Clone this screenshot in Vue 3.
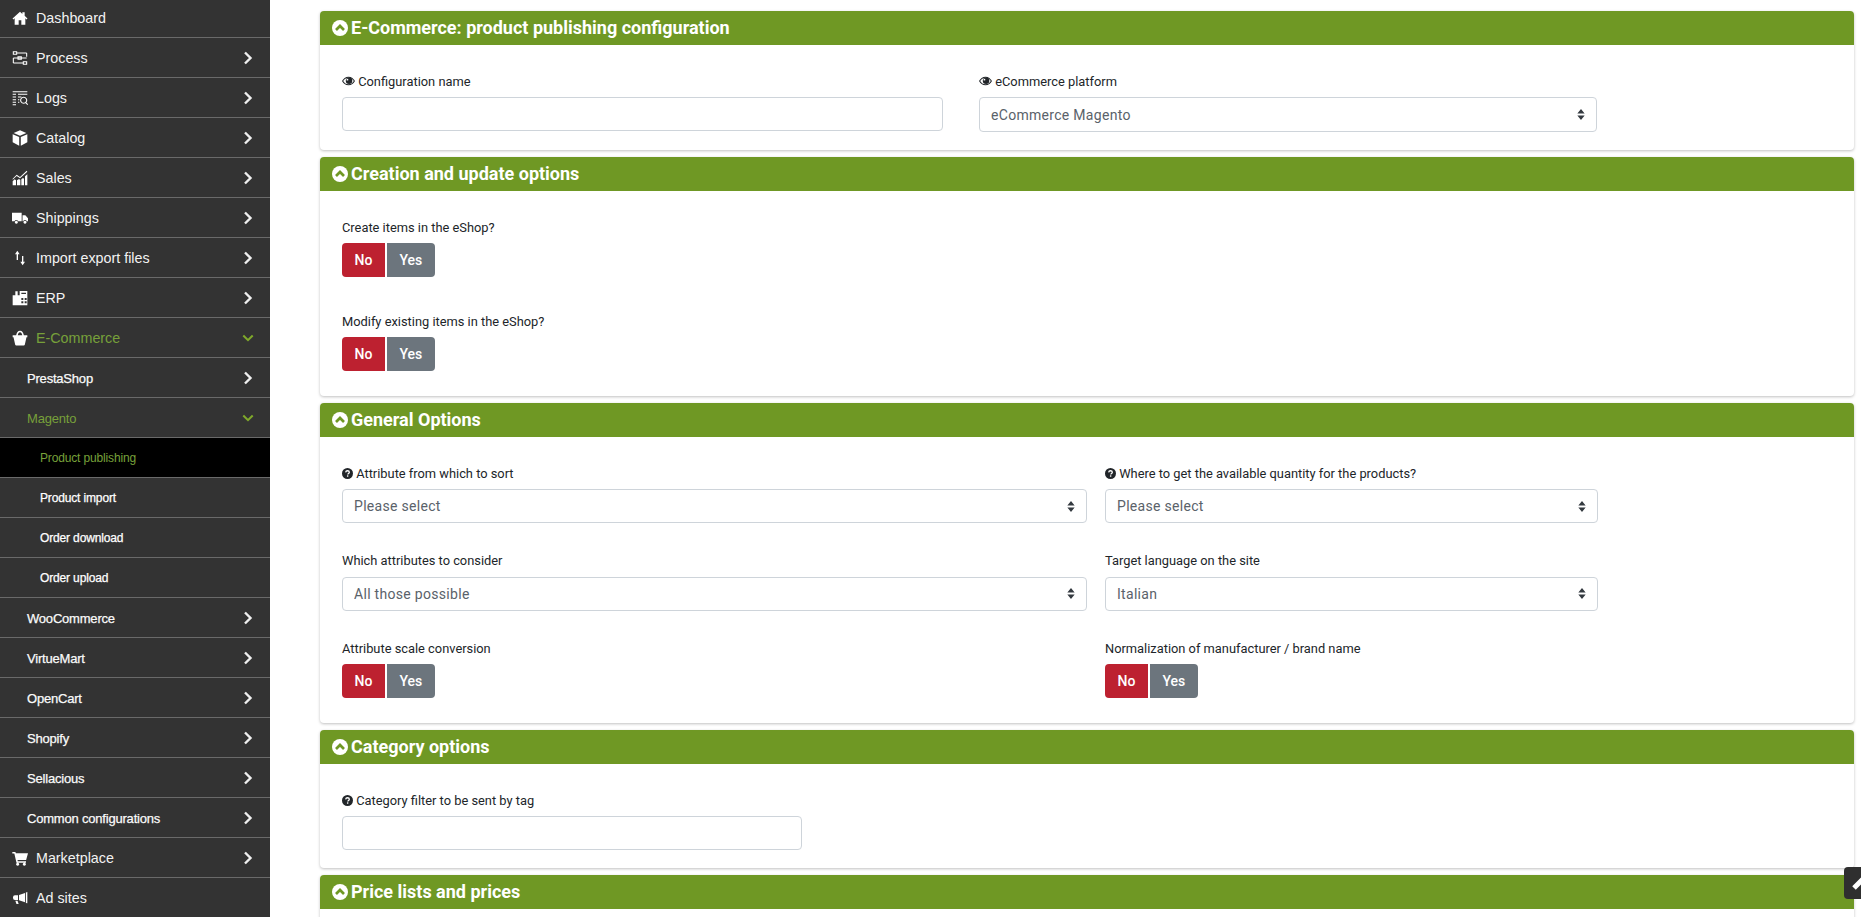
<script setup>
const icons = {
  home: 'M12 2.500 0.800 12.600l1.300 1.500L4 12.500V22h6v-6.500h4V22h6v-9.500l1.900 1.600 1.300-1.500-4.200-3.800V3.500h-3.500v2.400z',
  process: 'M2 2.500h5v4H2zM7 4.500h15M22 4.500v5.500M2 12h20M2 12v7.500M9 10h5v4H9zM2 19.500h15M17 17.500h5v4h-5z',
  logs: 'M1 2.500h22M9 6.500h14M1 6.500h5M1 10.500h5M9 10.500h5M1 14.500h5M1 18.500h5M1 22h5M9 14.500h2M9 18.500h2M17.500 11a4.500 4.500 0 1 0 .01 0M20.500 18.500l3 3.500',
  cube: 'M12 .5 2.500 4.500 12 8.500l9.500-4zM1 6.500v11.800l9.800 5.200V10.500zM23 6.500 13.200 10.500v13l9.800-5.200z',
  sales: 'M1 23v-6l3-3 2 1.500V23zM7.500 23v-7.500l3-2 2 1.500v8zM14 23v-9l2.500-2 1.500 1v10zM19.500 23V9.500l3.500-3V23zM1 13l6-6 5 3.500L22 1l1 1.500-11 10-5-3.500-6 5.500z',
  truck: 'M0 4h14.500v13H9.200a2.900 2.900 0 0 0-5.400 0H0zM15.800 8h4.200l4 4.500V17h-1.800a2.900 2.900 0 0 0-5.400 0h-1zM6.500 16a2.300 2.300 0 1 0 .01 0M19.500 16a2.300 2.300 0 1 0 .01 0',
  erp: 'M1 23V8h4V2h3.500v6h3V1.500H23V23zM14 12h3v3h-3zM19 12h3v3h-3zM14 17h3v3h-3zM19 17h3v3h-3zM14 4h7v2h-7z',
  basket: 'M12 1c-3.200 0-5 2.500-5.800 7H1v2.800h1.300L4.800 22a1.700 1.700 0 0 0 1.700 1.200h11A1.700 1.700 0 0 0 19.200 22l2.500-11.200H23V8h-5.200C17 3.500 15.200 1 12 1zm0 2.500c1.700 0 2.800 1.600 3.400 4.500H8.600C9.200 5.100 10.300 3.500 12 3.500z',
  cart: 'M.5 3h4.500l.8 2H24l-2.800 10H8.300l.4 2H21v2.300H6.700L3.500 5.300H.5zM8.500 19a2.300 2.300 0 1 0 .01 0M18.500 19a2.300 2.300 0 1 0 .01 0',
  horn: 'M23 3v17l-2.200-.6V3.600zM19.500 4.500v14L10.500 15.500V7.500zM9 8v7H4.500a3 3 0 0 1-3-3v-1a3 3 0 0 1 3-3zM5 16h3.300l1.700 5H6.700z'
}

const menu = [
  { label: 'Dashboard', icon: 'home', arrow: false },
  { label: 'Process', icon: 'process', stroke: true, arrow: true },
  { label: 'Logs', icon: 'logs', stroke: true, arrow: true },
  { label: 'Catalog', icon: 'cube', arrow: true },
  { label: 'Sales', icon: 'sales', arrow: true },
  { label: 'Shippings', icon: 'truck', arrow: true },
  { label: 'Import export files', icon: 'updown', arrow: true },
  { label: 'ERP', icon: 'erp', arrow: true },
  { label: 'E-Commerce', icon: 'basket', arrow: true, open: true },
  { label: 'PrestaShop', level: 1, arrow: true },
  { label: 'Magento', level: 1, arrow: true, open: true },
  { label: 'Product publishing', level: 2, active: true },
  { label: 'Product import', level: 2 },
  { label: 'Order download', level: 2 },
  { label: 'Order upload', level: 2 },
  { label: 'WooCommerce', level: 1, arrow: true },
  { label: 'VirtueMart', level: 1, arrow: true },
  { label: 'OpenCart', level: 1, arrow: true },
  { label: 'Shopify', level: 1, arrow: true },
  { label: 'Sellacious', level: 1, arrow: true },
  { label: 'Common configurations', level: 1, arrow: true },
  { label: 'Marketplace', icon: 'cart', arrow: true },
  { label: 'Ad sites', icon: 'horn', arrow: false }
]
</script>

<template>
  <div class="page">
    <nav class="sidebar">
      <a
        v-for="item in menu"
        :key="item.label"
        class="item"
        :class="[`level-${item.level || 0}`, { open: item.open, active: item.active }]"
      >
        <span v-if="item.icon" class="item-icon">
          <svg v-if="item.icon === 'updown'" viewBox="0 0 24 24">
            <path d="M8 1 4.500 6.500H7V15h2V6.500h2.500zM16 23l3.500-5.500H17V9h-2v8.500h-2.500z" fill="#fff" />
          </svg>
          <svg v-else viewBox="0 0 24 24">
            <path
              :d="icons[item.icon]"
              :fill="item.stroke ? 'none' : '#fff'"
              :stroke="item.stroke ? '#fff' : 'none'"
              :stroke-width="item.stroke ? 1.6 : 0"
              fill-rule="evenodd"
            />
          </svg>
        </span>
        <span class="item-label">{{ item.label }}</span>
        <svg v-if="item.arrow && !item.open" class="chev" viewBox="0 0 10 14">
          <path d="M2 1.500 7.500 7 2 12.500" />
        </svg>
        <svg v-if="item.arrow && item.open" class="chev-down" viewBox="0 0 14 10">
          <path d="M1.500 2 7 7.500 12.500 2" />
        </svg>
      </a>
    </nav>

    <main class="content">
      <section class="card">
        <h2 class="card-head">
          <svg class="head-icon" viewBox="0 0 24 24"><circle cx="12" cy="12" r="12" fill="#fff" /><path d="M6 15l6-6 6 6" fill="none" stroke="#6f9824" stroke-width="4" /></svg>
          E-Commerce: product publishing configuration
        </h2>
        <div class="card-body grid-a">
          <div class="field">
            <label class="lbl"><svg class="eye" viewBox="0 0 24 16"><path d="M12 0C6.500 0 2.500 3.500 0 8c2.500 4.500 6.500 8 12 8s9.500-3.500 12-8c-2.500-4.500-6.500-8-12-8z" /><path fill="#fff" d="M12 1.800C7.500 1.800 4.300 4.500 2.200 8c2.100 3.500 5.300 6.200 9.800 6.200s7.700-2.700 9.800-6.200c-2.100-3.500-5.300-6.200-9.800-6.200z" /><circle cx="13" cy="7.500" r="6" /><rect x="8.500" y="4" width="3" height="3" fill="#fff" /></svg> Configuration name</label>
            <input class="control input" type="text" />
          </div>
          <div class="field">
            <label class="lbl"><svg class="eye" viewBox="0 0 24 16"><path d="M12 0C6.500 0 2.500 3.500 0 8c2.500 4.500 6.500 8 12 8s9.500-3.500 12-8c-2.500-4.500-6.500-8-12-8z" /><path fill="#fff" d="M12 1.800C7.500 1.800 4.300 4.500 2.200 8c2.100 3.500 5.300 6.200 9.800 6.200s7.700-2.700 9.800-6.200c-2.100-3.500-5.300-6.200-9.800-6.200z" /><circle cx="13" cy="7.500" r="6" /><rect x="8.500" y="4" width="3" height="3" fill="#fff" /></svg> eCommerce platform</label>
            <select class="control select tall"><option>eCommerce Magento</option></select>
          </div>
        </div>
      </section>

      <section class="card">
        <h2 class="card-head">
          <svg class="head-icon" viewBox="0 0 24 24"><circle cx="12" cy="12" r="12" fill="#fff" /><path d="M6 15l6-6 6 6" fill="none" stroke="#6f9824" stroke-width="4" /></svg>
          Creation and update options
        </h2>
        <div class="card-body stack">
          <div class="field">
            <label class="lbl">Create items in the eShop?</label>
            <div class="toggle"><button class="no">No</button><button class="yes">Yes</button></div>
          </div>
          <div class="field">
            <label class="lbl">Modify existing items in the eShop?</label>
            <div class="toggle"><button class="no">No</button><button class="yes">Yes</button></div>
          </div>
        </div>
      </section>

      <section class="card">
        <h2 class="card-head">
          <svg class="head-icon" viewBox="0 0 24 24"><circle cx="12" cy="12" r="12" fill="#fff" /><path d="M6 15l6-6 6 6" fill="none" stroke="#6f9824" stroke-width="4" /></svg>
          General Options
        </h2>
        <div class="card-body grid-b">
          <div class="field">
            <label class="lbl"><svg class="help" viewBox="0 0 24 24"><circle cx="12" cy="12" r="12" /><path d="M8 9.500C8.300 7 10 6 12 6c2.500 0 4 1.500 4 3.300 0 2.700-3.300 2.700-3.300 5" fill="none" stroke="#fff" stroke-width="2.800" /><rect x="10.800" y="16" width="3" height="3" fill="#fff" /></svg> Attribute from which to sort</label>
            <select class="control select"><option>Please select</option></select>
          </div>
          <div class="field">
            <label class="lbl"><svg class="help" viewBox="0 0 24 24"><circle cx="12" cy="12" r="12" /><path d="M8 9.500C8.300 7 10 6 12 6c2.500 0 4 1.500 4 3.300 0 2.700-3.300 2.700-3.300 5" fill="none" stroke="#fff" stroke-width="2.800" /><rect x="10.800" y="16" width="3" height="3" fill="#fff" /></svg> Where to get the available quantity for the products?</label>
            <select class="control select"><option>Please select</option></select>
          </div>
          <div class="field">
            <label class="lbl">Which attributes to consider</label>
            <select class="control select"><option>All those possible</option></select>
          </div>
          <div class="field">
            <label class="lbl">Target language on the site</label>
            <select class="control select"><option>Italian</option></select>
          </div>
          <div class="field">
            <label class="lbl">Attribute scale conversion</label>
            <div class="toggle"><button class="no">No</button><button class="yes">Yes</button></div>
          </div>
          <div class="field">
            <label class="lbl">Normalization of manufacturer / brand name</label>
            <div class="toggle"><button class="no">No</button><button class="yes">Yes</button></div>
          </div>
        </div>
      </section>

      <section class="card">
        <h2 class="card-head">
          <svg class="head-icon" viewBox="0 0 24 24"><circle cx="12" cy="12" r="12" fill="#fff" /><path d="M6 15l6-6 6 6" fill="none" stroke="#6f9824" stroke-width="4" /></svg>
          Category options
        </h2>
        <div class="card-body grid-c">
          <div class="field">
            <label class="lbl"><svg class="help" viewBox="0 0 24 24"><circle cx="12" cy="12" r="12" /><path d="M8 9.500C8.300 7 10 6 12 6c2.500 0 4 1.500 4 3.300 0 2.700-3.300 2.700-3.300 5" fill="none" stroke="#fff" stroke-width="2.800" /><rect x="10.800" y="16" width="3" height="3" fill="#fff" /></svg> Category filter to be sent by tag</label>
            <input class="control input" type="text" />
          </div>
        </div>
      </section>

      <section class="card last">
        <h2 class="card-head">
          <svg class="head-icon" viewBox="0 0 24 24"><circle cx="12" cy="12" r="12" fill="#fff" /><path d="M6 15l6-6 6 6" fill="none" stroke="#6f9824" stroke-width="4" /></svg>
          Price lists and prices
        </h2>
      </section>
    </main>

    <a class="to-top">
      <svg viewBox="0 0 24 24"><path d="M4 16 12 8l8 8" fill="none" stroke="#fff" stroke-width="4" /></svg>
    </a>
  </div>
</template>

<style>
html, body { overflow: hidden; background: #fff; }
</style>

<style scoped>
.page {
  position: relative;
  display: flex;
  width: 1861px;
  height: 917px;
  overflow: hidden;
  font-family: Roboto, "Liberation Sans", sans-serif;
  background: #fff;
}

.sidebar {
  flex: 0 0 270px;
  height: 917px;
  overflow: hidden;
  background: #333;
  font-family: "Liberation Sans", Arial, sans-serif;
  display: flex;
  flex-direction: column;
}
.item {
  flex: 0 0 40px;
  box-sizing: border-box;
  height: 40px;
  display: flex;
  align-items: center;
  border-bottom: 1px solid #6a6a6a;
  color: #f2f2f2;
  font-size: 14.3px;
  padding: 0 17px 0 12px;
}
.item:first-child { flex-basis: 38px; height: 38px; padding-bottom: 2px; }
.item:last-child { border-bottom: 0; }
.item-icon {
  width: 16px;
  height: 16px;
  margin-right: 8px;
  display: flex;
}
.item-icon svg { width: 16px; height: 16px; }
.item-label { flex: 1; white-space: nowrap; }
.level-1 { padding-left: 27px; padding-top: 1px; font-size: 13px; letter-spacing: -0.2px; -webkit-text-stroke: 0.25px #f2f2f2; color: #fff; }
.level-2 { padding-left: 40px; padding-top: 1px; font-size: 12px; letter-spacing: -0.15px; -webkit-text-stroke: 0.25px #fff; color: #fff; }
.item.open .item-label { color: #77a03a; -webkit-text-stroke: 0; }
.item.active { background: #000; }
.item.active .item-label { color: #77a03a; -webkit-text-stroke: 0; }
.chev { width: 10px; height: 14px; fill: none; stroke: #f0f0f0; stroke-width: 2.400; }
.chev-down { width: 12px; height: 10px; margin-right: -1px; fill: none; stroke: #7fa82b; stroke-width: 2.400; }

.content {
  flex: 1;
  min-width: 0;
  padding: 11px 7px 0 50px;
  display: flex;
  flex-direction: column;
  gap: 7px;
}
.card {
  background: #fff;
  border-radius: 4px;
  box-shadow: 0 1px 3px rgba(0, 0, 0, 0.25);
}
.card.last { flex: 1; margin-bottom: -20px; }
.card-head {
  height: 34px;
  margin: 0;
  box-sizing: border-box;
  background: #6f9824;
  color: #fff;
  border-radius: 4px 4px 0 0;
  display: flex;
  align-items: center;
  gap: 3px;
  padding-left: 12px;
  font-size: 18px;
  font-weight: 700;
  line-height: 34px;
}
.head-icon { width: 16px; height: 16px; flex: none; margin-top: -1px; }
.card-body { box-sizing: border-box; padding: 26px 22px 18px; }

.grid-a { display: grid; grid-template-columns: 601px 618px; column-gap: 36px; }
.grid-b { display: grid; grid-template-columns: 745px 493px; column-gap: 18px; row-gap: 27.5px; padding-bottom: 25px; }
.grid-c { display: grid; grid-template-columns: 460px; padding-bottom: 18px; }
.stack { display: flex; flex-direction: column; gap: 34px; padding-bottom: 25px; }

.field { display: flex; flex-direction: column; }
.lbl {
  display: flex;
  align-items: center;
  height: 20px;
  margin-bottom: 6px;
  font-size: 12.85px;
  color: #212529;
  white-space: pre;
}
.eye { width: 13px; height: 10px; fill: #212529; }
.help { width: 11px; height: 11px; fill: #212529; }

.control {
  box-sizing: border-box;
  width: 100%;
  height: 34px;
  border: 1px solid #ced4da;
  border-radius: 4px;
  background-color: #fff;
  margin: 0;
  outline: 0;
  font-family: Roboto, sans-serif;
  font-size: 14px;
  letter-spacing: 0.3px;
  color: #5a626a;
}
.tall { height: 35px; }
.select {
  appearance: none;
  -webkit-appearance: none;
  padding: 0 11px;
  background-image: url("data:image/svg+xml,%3Csvg xmlns='http://www.w3.org/2000/svg' viewBox='0 0 8 12'%3E%3Cpath fill='%23343a40' d='M4 0 8 5H0zM4 12 0 7h8z'/%3E%3C/svg%3E");
  background-repeat: no-repeat;
  background-position: right 11px center;
  background-size: 8px 11px;
}

.toggle { display: flex; gap: 2px; height: 34px; }
.toggle button {
  border: 0;
  padding: 0 12.5px;
  color: #fff;
  font-family: Roboto, sans-serif;
  font-size: 14px;
  font-weight: 500;
  height: 34px;
}
.no { background: #bd2130; border-radius: 4px 0 0 4px; }
.yes { background: #6c757d; border-radius: 0 4px 4px 0; }

.to-top {
  position: absolute;
  left: 1844px;
  top: 867px;
  width: 40px;
  height: 32px;
  background: #2f2f2f;
  border-radius: 4px;
  display: flex;
  align-items: center;
  justify-content: center;
}
.to-top svg { flex: none; width: 30px; height: 30px; }
</style>
